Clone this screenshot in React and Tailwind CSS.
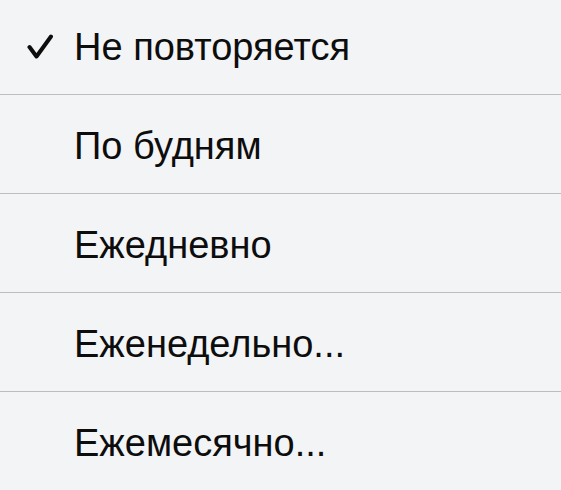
import React from 'react';

const options = [
  { label: 'Не повторяется', checked: true },
  { label: 'По будням' },
  { label: 'Ежедневно' },
  { label: 'Еженедельно...' },
  { label: 'Ежемесячно...' },
];

const CheckMark = () => (
  <svg width="26" height="25" viewBox="0 0 26 25" fill="none" className="ml-[27px]">
    <path
      d="M2.5 13 L9.5 22.5 L24 2.5"
      stroke="#0d0d0d"
      strokeWidth="4"
      strokeLinecap="round"
      strokeLinejoin="round"
    />
  </svg>
);

const RepeatMenu = () => (
  <div className="-mt-[4px]">
    {options.map((opt, idx) => (
      <div
        key={idx}
        className="flex items-center h-[99px] border-b border-[#bdbdc1]"
      >
        <div className="w-[74px] flex items-center pt-[2px]">
          {opt.checked && <CheckMark />}
        </div>
        <span className="text-[38px] leading-none text-[#0d0d0d] pt-[3px]">
          {opt.label}
        </span>
      </div>
    ))}
  </div>
);

export default function App() {
  return (
    <div
      className="w-[561px] h-[490px] overflow-hidden bg-[#f3f4f6]"
      style={{ fontFamily: '"Liberation Sans", Arial, sans-serif' }}
    >
      <RepeatMenu />
    </div>
  );
}
